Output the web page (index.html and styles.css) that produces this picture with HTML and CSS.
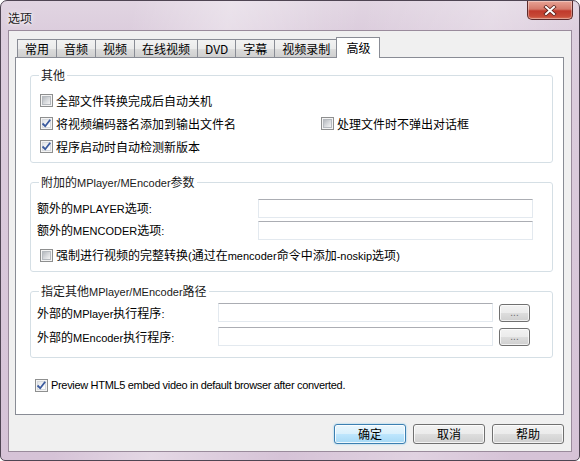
FILE: index.html
```html
<!DOCTYPE html>
<html lang="zh-CN">
<head>
<meta charset="utf-8">
<title>选项</title>
<link rel="stylesheet" href="styles.css">
</head>
<body>
<div class="window">
  <div class="titlebar">
    <span class="title">选项</span>
    <button class="close" type="button" aria-label="关闭">
      <svg width="14" height="11" viewBox="0 0 14 11">
        <path d="M3 2 L11 9 M11 2 L3 9" stroke="#5a1f1a" stroke-width="3.6" stroke-linecap="square"/>
        <path d="M3 2 L11 9 M11 2 L3 9" stroke="#ffffff" stroke-width="2" stroke-linecap="square"/>
      </svg>
    </button>
  </div>

  <div class="client">
    <div class="tabs">
      <div class="tab">常用</div>
      <div class="tab">音频</div>
      <div class="tab">视频</div>
      <div class="tab">在线视频</div>
      <div class="tab">DVD</div>
      <div class="tab">字幕</div>
      <div class="tab">视频录制</div>
      <div class="tab active">高级</div>
    </div>

    <div class="panel">
      <fieldset class="group group-other">
        <legend>其他</legend>
        <div class="check-grid">
          <label class="check"><span class="cb"></span>全部文件转换完成后自动关机</label>
          <span></span>
          <label class="check"><span class="cb on"><svg viewBox="0 0 13 13"><path d="M2.5 6.5 L5.2 9.2 L10.2 2.8" fill="none" stroke="#3a5a9e" stroke-width="1.8"/></svg></span>将视频编码器名添加到输出文件名</label>
          <label class="check"><span class="cb"></span>处理文件时不弹出对话框</label>
          <label class="check"><span class="cb on"><svg viewBox="0 0 13 13"><path d="M2.5 6.5 L5.2 9.2 L10.2 2.8" fill="none" stroke="#3a5a9e" stroke-width="1.8"/></svg></span>程序启动时自动检测新版本</label>
        </div>
      </fieldset>

      <fieldset class="group group-args">
        <legend>附加的<span class="en">MPlayer/MEncoder</span>参数</legend>
        <div class="field-grid">
          <span class="label">额外的<span class="en">MPLAYER</span>选项<span class="en">:</span></span>
          <span class="textbox"></span>
          <span class="label">额外的<span class="en">MENCODER</span>选项<span class="en">:</span></span>
          <span class="textbox"></span>
        </div>
        <label class="check check-wide"><span class="cb"></span><span>强制进行视频的完整转换<span class="en">(</span>通过在<span class="en">mencoder</span>命令中添加<span class="en">-noskip</span>选项<span class="en">)</span></span></label>
      </fieldset>

      <fieldset class="group group-paths">
        <legend>指定其他<span class="en">MPlayer/MEncoder</span>路径</legend>
        <div class="path-grid">
          <span class="label">外部的<span class="en">MPlayer</span>执行程序<span class="en">:</span></span>
          <span class="textbox"></span>
          <button class="browse" type="button">...</button>
          <span class="label">外部的<span class="en">MEncoder</span>执行程序<span class="en">:</span></span>
          <span class="textbox"></span>
          <button class="browse" type="button">...</button>
        </div>
      </fieldset>

      <label class="check preview"><span class="cb on"><svg viewBox="0 0 13 13"><path d="M2.5 6.5 L5.2 9.2 L10.2 2.8" fill="none" stroke="#3a5a9e" stroke-width="1.8"/></svg></span>Preview HTML5 embed video in default browser after converted.</label>
    </div>

    <div class="actions">
      <button class="btn default" type="button">确定</button>
      <button class="btn" type="button">取消</button>
      <button class="btn" type="button">帮助</button>
    </div>
  </div>
</div>
</body>
</html>
```

FILE: styles.css
```css
html, body {
  margin: 0;
  padding: 0;
  background: #ffffff;
}

body {
  font-family: "Noto Sans CJK SC", "Liberation Sans", sans-serif;
  font-size: 12px;
  line-height: 16px;
  color: #000;
}

/* Latin runs inside Chinese labels use the smaller UI face;
   zero line-height keeps them from growing the line box */
.en {
  font-family: "Liberation Sans", sans-serif;
  font-size: 11px;
  line-height: 0;
}

/* ---- window frame ---- */
.window {
  width: 580px;
  height: 461px;
  box-sizing: border-box;
  border: 1px solid #4f4553;
  border-radius: 7px 7px 5px 5px;
  background:
    linear-gradient(100deg, rgba(255,255,255,0) 20%, rgba(255,255,255,0.35) 35%, rgba(255,255,255,0) 55%, rgba(255,255,255,0.25) 75%, rgba(255,255,255,0) 90%),
    linear-gradient(#e1d5e2 0px, #dccddd 30px, #d6c3d7 100%);
  padding: 0 7px 8px 7px;
  display: flex;
  flex-direction: column;
  overflow: hidden;
}

.titlebar {
  height: 29px;
  display: flex;
  justify-content: space-between;
  align-items: flex-start;
  flex: none;
}

.title {
  padding-top: 9px;
  font-size: 12px;
  color: #1a1a1a;
  text-shadow: 0 0 6px #fff, 0 0 3px #fff;
}

.close {
  width: 46px;
  height: 19px;
  margin-right: -1px;
  padding: 0;
  border: 1px solid #5c2b2b;
  border-top: none;
  border-radius: 0 0 5px 5px;
  background: linear-gradient(#e8a395 0%, #d57a6b 45%, #c0392b 55%, #c74a37 85%, #d9735a 100%);
  box-shadow: inset 0 0 0 1px rgba(255,255,255,0.35);
  display: flex;
  align-items: center;
  justify-content: center;
}

.close svg {
  display: block;
}

/* ---- client area ---- */
.client {
  flex: 1;
  background: #f0f0f0;
  border: 1px solid #9a8b9c;
  padding: 6px 7px 0 6px;
  display: flex;
  flex-direction: column;
}

.tabs {
  height: 20px;
  display: flex;
  align-items: flex-end;
  padding-left: 2px;
  flex: none;
}

.tab {
  height: 18px;
  box-sizing: border-box;
  padding: 0 7px;
  margin-right: -1px;
  border: 1px solid #898c95;
  border-bottom: none;
  background: linear-gradient(#f2f2f2 0%, #ebebeb 50%, #dddddd 51%, #cfcfcf 100%);
  line-height: 17px;
  white-space: nowrap;
}

.tab.active {
  position: relative;
  z-index: 1;
  height: 21px;
  margin: 0 -1px -1px -1px;
  padding: 0 9px;
  background: #ffffff;
  line-height: 19px;
}

.panel {
  flex: 1;
  background: #ffffff;
  border: 1px solid #898c95;
  padding: 9px 10px 0 14px;
  display: flex;
  flex-direction: column;
}

/* ---- group boxes ---- */
.group {
  margin: 0;
  border: 1px solid #d5dfe5;
  border-radius: 3px;
  padding: 0 0 4px 6px;
  min-width: 0;
}

.group legend {
  padding: 0 2px;
  margin-left: 2px;
  line-height: 16px;
  color: #1a1a1a;
}

.group + .group {
  margin-top: 11px;
}

.group-other {
  padding-top: 6px;
  padding-bottom: 4px;
}

.check-grid {
  display: grid;
  grid-template-columns: 281px 1fr;
  grid-auto-rows: 23px;
}

.check {
  display: flex;
  align-items: center;
  gap: 3px;
  white-space: nowrap;
  padding-left: 3px;
}

/* ---- check boxes ---- */
.cb {
  width: 13px;
  height: 13px;
  box-sizing: border-box;
  border: 1px solid #8e8f8f;
  background: #f4f4f4;
  padding: 1px;
  flex: none;
  display: block;
  position: relative;
}

.cb::before {
  content: "";
  display: block;
  width: 9px;
  height: 9px;
  box-sizing: border-box;
  border: 1px solid #b6babf;
  background: linear-gradient(135deg, #b5b9be 0%, #d9dbde 55%, #f4f4f4 100%);
}

.cb.on::before {
  border-color: #d7dade;
  background: linear-gradient(135deg, #e2e5e8 0%, #f5f6f7 60%, #ffffff 100%);
}

.cb svg {
  position: absolute;
  left: -1px;
  top: -1px;
  width: 13px;
  height: 13px;
}

/* ---- field rows ---- */
.group-args {
  padding-top: 7px;
  padding-right: 19px;
  padding-bottom: 5px;
}

.field-grid {
  display: grid;
  grid-template-columns: 221px 1fr;
  grid-auto-rows: 22px;
  align-items: center;
}

.label {
  white-space: nowrap;
}

.textbox {
  height: 19px;
  box-sizing: border-box;
  border: 1px solid #e3e9ef;
  border-top-color: #abadb3;
  background: #ffffff;
  display: block;
}

.check-wide {
  height: 22px;
  margin-top: 3px;
}

.group-paths {
  padding-top: 3px;
  padding-right: 22px;
  padding-bottom: 10px;
}

.path-grid {
  display: grid;
  grid-template-columns: 175px 1fr 31px;
  column-gap: 6px;
  row-gap: 3px;
  grid-auto-rows: 21px;
  align-items: center;
}

.browse {
  height: 18px;
  width: 31px;
  padding: 0;
  border: 1px solid #707070;
  border-radius: 3px;
  background: linear-gradient(#f2f2f2 0%, #ebebeb 50%, #dddddd 51%, #cfcfcf 100%);
  box-shadow: inset 0 0 0 1px rgba(255,255,255,0.7);
  font-family: "Liberation Sans", sans-serif;
  font-size: 10px;
  line-height: 14px;
  color: #6d6d6d;
}

.preview {
  height: 22px;
  margin-top: 16px;
  padding-left: 5px;
  gap: 3px;
  font-family: "Liberation Sans", sans-serif;
  font-size: 11px;
  letter-spacing: -0.32px;
}

/* ---- dialog buttons ---- */
.actions {
  flex: none;
  height: 20px;
  margin: 9px 0 7px;
  display: flex;
  justify-content: flex-end;
  gap: 7px;
}

.btn {
  width: 72px;
  height: 20px;
  padding: 0;
  border: 1px solid #707070;
  border-radius: 3px;
  background: linear-gradient(#f2f2f2 0%, #ebebeb 50%, #dddddd 51%, #cfcfcf 100%);
  box-shadow: inset 0 0 0 1px rgba(255,255,255,0.75);
  font-family: "Noto Sans CJK SC", "Liberation Sans", sans-serif;
  font-size: 12px;
  line-height: 16px;
  color: #000;
}

.btn.default {
  border-color: #3c7fb1;
  background: linear-gradient(#eaf6fd 0%, #d9f0fc 50%, #bee6fd 51%, #a7d9f5 100%);
  box-shadow: inset 0 0 0 1px rgba(255,255,255,0.8), 0 0 2px #7fc8f0;
}
```
